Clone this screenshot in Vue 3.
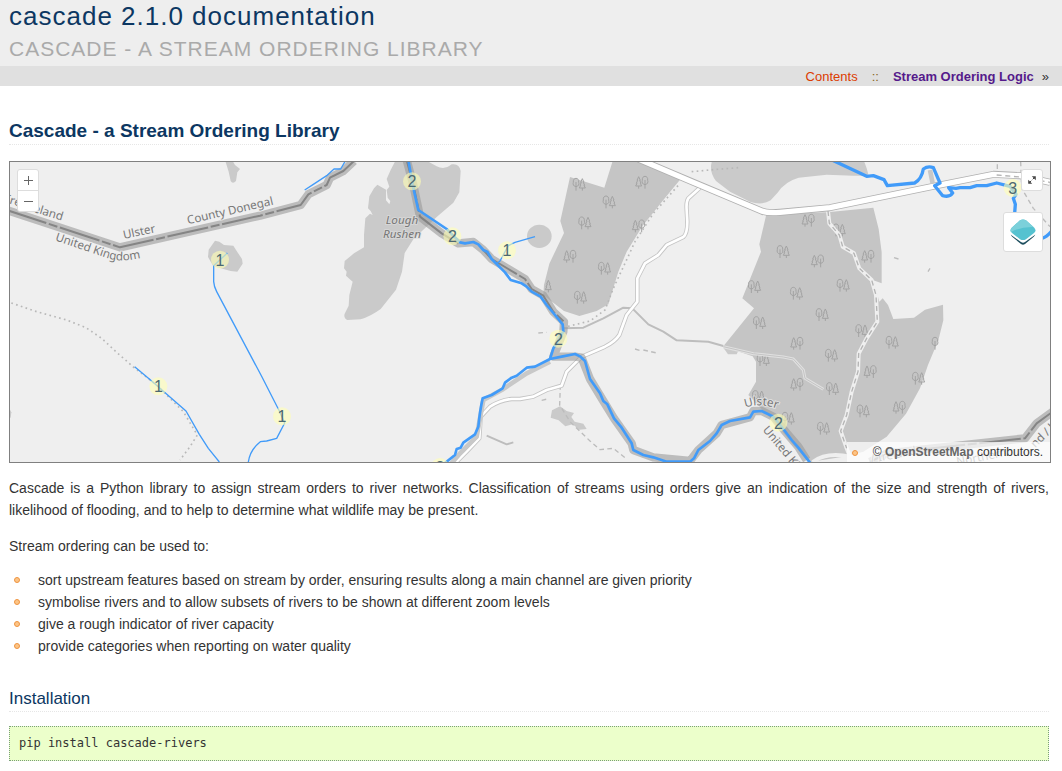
<script setup>
const uses = [
  'sort upstream features based on stream by order, ensuring results along a main channel are given priority',
  'symbolise rivers and to allow subsets of rivers to be shown at different zoom levels',
  'give a rough indicator of river capacity',
  'provide categories when reporting on water quality',
]

// Map units: three per screen pixel.
const broadleafFirst = [
  [1738, 88], [1828, 141], [1755, 204], [1814, 340], [1742, 427], [2350, 290],
  [2264, 395], [2279, 503], [2290, 614], [2276, 725], [2390, 415], [2530, 391],
  [2467, 479], [2586, 527], [2495, 601], [2498, 701], [2677, 562], [2365, 790],
  [2471, 820], [2756, 670], [2590, 768], [2518, 225],
]
const coniferFirst = [
  [1926, 82], [1916, 213], [1710, 304], [2425, 196], [2453, 318], [2604, 304],
  [2391, 565], [2391, 688], [2611, 650], [2698, 757],
]

const orders = [
  [660, 314, 1], [475, 694, 1], [1236, 79, 2], [1357, 244, 2], [1521, 286, 1],
  [846, 784, 1], [1320, 936, 2], [1675, 551, 2], [2335, 803, 2], [3038, 99, 3],
]
</script>

<template>
  <div class="page">
    <header class="header">
      <div class="title">cascade 2.1.0 documentation</div>
      <div class="subtitle">Cascade - a Stream Ordering Library</div>
    </header>
    <nav class="topnav">
      <a class="contents" href="#contents">Contents</a>
      <span class="sep">::</span>
      <a class="next" href="#logic">Stream Ordering Logic</a>
      <span>»</span>
    </nav>

    <main class="content">
      <h1>Cascade - a Stream Ordering Library</h1>

      <div class="map">
        <svg class="canvas" viewBox="30 21 3120 900" preserveAspectRatio="xMidYMid slice" role="img" aria-label="River network map">
          <defs>
            <symbol id="broadleaf" viewBox="0 0 18 38" overflow="visible">
              <path d="M9 38V12M9 26C1 25 -1 18 1 13C0 5 4 1 9 1C14 1 18 5 17 13C19 18 17 25 9 26" />
            </symbol>
            <symbol id="conifer" viewBox="0 0 18 38" overflow="visible">
              <path d="M9 38V30M9 2L4 13H6L2 22H4L0 30H18L14 22H16L12 13H14Z" />
            </symbol>
            <path id="uk-west" d="M164 256L318 308Q362 326 440 304" />
            <path id="ulster-east" d="M2236 758Q2280 741 2340 764" />
          </defs>

          <g class="water">
            <path d="M676 18L686 50L692 78Q698 88 708 78L712 52L720 42L705 30L698 18Z" />
            <path d="M645 257L658 260L672 270L700 272L710 288L726 312L728 326L712 350L692 348L640 334L624 306L626 284Z" />
            <path d="M1186 18L1172 45L1160 72L1168 95L1160 105L1163 128L1171 138L1168 148L1158 136L1158 104L1132 89L1122 100L1108 124L1104 160L1112 168L1118 180L1110 176L1096 190L1092 240L1092 277L1062 295L1034 318L1032 340L1040 350L1038 362L1058 380L1048 420L1046 452L1034 476Q1030 490 1042 495L1082 493Q1112 484 1142 462L1188 404L1206 350L1214 294L1240 253L1310 186L1360 143L1378 112L1382 48Q1378 24 1355 28Q1334 46 1310 34L1285 20Z" />
            <ellipse cx="1618" cy="244" rx="37" ry="35" />
            <path d="M2136 18Q2126 50 2148 78L2190 110L2250 140Q2285 152 2312 136L2334 112Q2354 80 2396 68L2480 59L2560 62L2606 62L2600 40L2592 18Z" />
            <path d="M30 764L34 772L32 788H30Z" />
            <path d="M1656 766L1680 754L1700 768L1722 774L1714 786L1724 800L1750 806L1760 822L1738 824L1718 808L1696 814L1676 796L1652 788Z" />
            <path d="M2170 578L2216 585L2210 598L2184 598Z" />
          </g>

          <g class="forest">
            <path d="M1838 18H1945L2040 74L1990 135L1928 212L1880 290L1855 350L1825 448L1790 468L1738 483L1692 468L1630 420L1632 390L1648 326L1692 234L1681 198L1710 66L1813 98Z" />
            <path d="M2299 178L2482 172L2620 158L2636 222L2645 292V385L2620 376L2638 440L2648 430L2664 450L2680 492L2742 488L2775 464L2829 449L2830 496L2815 556L2784 630L2760 700L2718 776L2660 845L2590 890L2530 905L2428 921L2380 870L2340 820L2300 778L2245 720L2268 680L2268 620L2258 604L2170 574L2262 460L2227 430L2283 290L2278 268Z" />
          </g>

          <g class="trees">
            <template v-for="[x, y] in broadleafFirst" :key="`b${x}-${y}`">
              <use href="#broadleaf" :x="x - 19" :y="y - 19" width="18" height="38" />
              <use href="#conifer" :x="x" :y="y - 19" width="18" height="38" />
            </template>
            <template v-for="[x, y] in coniferFirst" :key="`c${x}-${y}`">
              <use href="#conifer" :x="x - 19" :y="y - 19" width="18" height="38" />
              <use href="#broadleaf" :x="x" :y="y - 19" width="18" height="38" />
            </template>
            <use href="#conifer" x="1636" y="374" width="18" height="38" />
            <use href="#broadleaf" x="2796" y="546" width="18" height="38" />
          </g>

          <g class="tracks">
            <path class="lane" d="M1690 520L1750 518L1810 490L1870 458L1897 460L1945 508L1990 530L2030 556L2125 560L2170 573" />
            <path class="lane" d="M1460 842L1520 868L1540 862" />
            <path class="lane-light" d="M2170 575L2260 596L2350 606L2380 612L2410 645L2415 670L2470 703" />
            <path class="lane-light-in" d="M2170 575L2260 596L2350 606L2380 612L2410 645L2415 670L2470 703" />
            <path class="dots" d="M34 444L110 470L200 495L258 518L305 550L350 592L400 636L470 690L550 770L592 840L570 875L540 915" />
            <path class="dots" d="M2034 92L1960 175L1905 260L1868 340L1840 400L1815 465L1770 498L1700 515" />
            <path class="dots" d="M2075 50L2140 44L2215 38" />
            <path class="dashes" d="M1681 690L1679 750L1710 800L1770 858L1800 884L1840 880L1880 912" />
            <path class="dashes" d="M1905 582L1925 588M1930 585L1975 595M1615 534L1640 532M1625 736L1642 732M2682 308L2702 314M2784 350L2790 340" />
            <path class="dashes" d="M2992 28V58M3062 20L3065 100L3100 160L3150 215" />
          </g>

          <g class="roads">
            <path class="casing" d="M2100 98L2065 130Q2058 140 2060 165L2062 200Q2062 236 2050 246L2000 270L1975 300L1935 325L1912 370V440L1880 480L1858 540Q1845 560 1815 575L1745 605L1700 650L1685 692L1640 705L1600 725L1560 732L1535 732Q1500 736 1470 755L1442 785L1438 850L1400 890L1365 925" />
            <path class="fill" d="M2100 98L2065 130Q2058 140 2060 165L2062 200Q2062 236 2050 246L2000 270L1975 300L1935 325L1912 370V440L1880 480L1858 540Q1845 560 1815 575L1745 605L1700 650L1685 692L1640 705L1600 725L1560 732L1535 732Q1500 736 1470 755L1442 785L1438 850L1400 890L1365 925" />
            <path class="gravel" d="M2484 168L2488 205L2518 240L2528 275L2562 295L2578 340L2615 375L2628 420L2632 500L2600 550L2576 596L2574 650L2555 710L2540 780L2522 828L2540 880L2550 905Q2480 890 2438 921" />
            <path class="gravel-dash" d="M2484 168L2488 205L2518 240L2528 275L2562 295L2578 340L2615 375L2628 420L2632 500L2600 550L2576 596L2574 650L2555 710L2540 780L2522 828L2540 880" />
            <path class="main-casing" d="M1915 12L2080 82L2285 168Q2300 175 2340 172L2490 158L2810 92L2980 58L3060 62L3150 82" />
            <path class="main-fill" d="M1915 12L2080 82L2285 168Q2300 175 2340 172L2490 158L2810 92L2980 58L3060 62L3150 82" />
            <path class="gravel-dash" d="M2990 60L3060 66L3150 82" />
          </g>

          <g class="boundary">
            <path class="band" d="M20 165L360 277L780 182L902 150L925 118L980 90L990 68L1030 48L1062 18" />
            <path class="line" d="M20 165L360 277L780 182L902 150L925 118L980 90L990 68L1030 48L1062 18" />
            <path class="band" d="M1220 15L1240 90L1260 185L1325 235L1375 265L1420 261L1450 285L1475 312L1525 342L1575 372L1595 402L1630 422L1660 470L1692 500L1690 530L1660 605L1725 605L1745 608L1770 672L1810 738L1842 790L1895 865L1900 885L1960 907L2070 918L2095 885L2150 835L2165 810L2250 787L2260 768L2285 768L2320 785L2352 825L2395 875L2420 915" />
            <path class="line" d="M1220 15L1240 90L1260 185L1325 235L1375 265M1450 285L1475 312L1525 342L1575 372L1595 402L1630 422L1660 470L1692 500" />
            <path class="under-bank" d="M1350 930L1380 895L1430 845L1450 735L1505 705L1580 655L1650 620" />
            <path class="band" d="M2610 921L2660 895L3075 850L3110 805L3165 765" />
            <path class="line" d="M2610 921L2660 895L3075 850L3110 805L3165 765" />
            <path class="under-bank" d="M2790 45L2798 85" />
          </g>

          <g class="labels">
            <text x="0" y="0" transform="translate(16 142) rotate(17)">Ire</text>
            <text x="0" y="0" transform="translate(98 170) rotate(17)">eland</text>
            <text x="0" y="0" transform="translate(372 252) rotate(-12)">Ulster</text>
            <text x="0" y="0" transform="translate(564 208) rotate(-13)">County Donegal</text>
            <text><textPath href="#uk-west">United Kingdom</textPath></text>
            <text class="lake" x="1206" y="208">Lough</text>
            <text class="lake" x="1206" y="250">Rushen</text>
            <text><textPath href="#ulster-east">Ulster</textPath></text>
            <text x="0" y="0" transform="translate(2287 825) rotate(50)">United Kingdom</text>
            <text x="0" y="0" transform="translate(2614 924) rotate(-11)">/ Ireland</text>
            <text x="0" y="0" transform="translate(2872 932) rotate(-11)">Northern</text>
            <text x="0" y="0" transform="translate(3106 880) rotate(-45)">nd / J</text>
          </g>

          <g class="streams">
            <path d="M682 294L641 332V380Q642 395 650 410L786 666L838 768L854 804L830 850L800 858L781 860Q750 885 745 921" />
            <path d="M404 635L455 678L558 768L598 838L625 880L658 921" />
            <path d="M914 105L940 88L980 62L1002 42L1022 42L1036 18" />
            <path d="M1605 245L1545 262L1525 272L1500 318L1488 328" />
          </g>
          <g class="rivers">
            <path d="M1225 15L1238 90L1255 165L1340 222L1380 262L1395 265L1420 261L1435 268L1450 285L1462 290L1475 312L1515 352L1532 375L1565 385L1580 395L1595 410L1622 425L1640 450L1665 480L1688 508L1690 530L1660 580L1650 612" />
            <path d="M1320 936L1365 900L1370 882L1382 878L1390 863L1425 838L1435 815Q1440 765 1448 730L1475 720L1508 700L1515 683L1535 668L1550 662L1580 638L1605 635L1650 612L1685 605L1725 597L1740 604L1755 618L1770 672L1800 715L1810 738L1822 748L1842 790L1865 818L1895 865L1900 885L1930 900L1960 907L2000 920H2070L2082 910L2095 885L2130 858L2150 835L2165 810L2190 798L2250 787L2260 770L2285 768L2320 785L2350 822L2375 855L2395 878L2430 923" />
            <path class="order3" d="M2496 15L2600 64L2620 62L2652 74L2662 92L2744 84Q2765 72 2770 42Q2784 32 2800 38L2820 84L2804 92L2828 122Q2850 128 2858 114L2846 98L2868 100L2880 98L2910 98L2930 92L2960 92L2990 84L3030 94L3048 118L3040 130L3046 148L3042 200M3124 250Q3138 248 3155 228" />
          </g>

          <g class="orders">
            <template v-for="[x, y, n] in orders" :key="`${x}-${y}`">
              <circle :cx="x" :cy="y" r="27" />
              <text :x="x" :y="y + 18">{{ n }}</text>
            </template>
          </g>
        </svg>

        <div class="zoom">
          <button type="button" aria-label="Zoom in">
            <svg viewBox="0 0 11 11"><path d="M5.5 1V10M1 5.5H10" /></svg>
          </button>
          <button type="button" aria-label="Zoom out">
            <svg viewBox="0 0 11 11"><path d="M1 5.5H10" /></svg>
          </button>
        </div>

        <div class="tools">
          <button class="full" type="button" aria-label="Toggle full-screen">
            <svg viewBox="0 0 10 10">
              <path class="shaft" d="M2 8L4.300 5.700M5.700 4.300L8 2" />
              <path d="M4.800 1.200H8.800V5.200ZM1.200 4.800V8.800H5.200Z" />
            </svg>
          </button>
          <button class="layers" type="button" aria-label="Layers">
            <svg viewBox="0 0 28 28">
              <path fill="#1d4e5e" d="M2 15.500L14 22L26 15.500Q26.500 17.500 24.800 18.800L16 26Q14 27.500 12 26L3.200 18.800Q1.500 17.500 2 15.500Z" />
              <path fill="#fff" d="M1 13L14 20L27 13Q27.500 16 25.500 17.300L16 24Q14 25.400 12 24L2.500 17.300Q.5 16 1 13Z" />
              <path fill="#55c2d0" d="M11 2.300Q14 .5 17 2.300L25 9.500Q28 12.500 25 15L17 21.200Q14 23 11 21.200L3 15Q0 12.500 3 9.500Z" />
              <path fill="#7bd0da" d="M11 2.300Q14 .5 17 2.300L24.500 9Q12 8.500 2 14Q.5 12 3 9.500Z" />
            </svg>
          </button>
        </div>

        <ul class="attribution">
          <li>© <a href="#osm">OpenStreetMap</a> contributors.</li>
        </ul>
      </div>

      <p class="intro">
        Cascade is a Python library to assign stream orders to river networks. Classification of streams using orders
        give an indication of the size and strength of rivers, likelihood of flooding, and to help to determine what
        wildlife may be present.
      </p>
      <p>Stream ordering can be used to:</p>
      <ul class="uses">
        <li v-for="use in uses" :key="use">{{ use }}</li>
      </ul>

      <h2>Installation</h2>
      <pre>pip install cascade-rivers</pre>
    </main>
  </div>
</template>

<style>
body {
  margin: 0;
  background: #fff;
}
</style>

<style scoped>
.page {
  font-family: "Liberation Sans", Arial, sans-serif;
  font-size: 14px;
  line-height: 22px;
  color: #333;
}
.header {
  padding: 0 9px 1px;
  background: #eee;
}
.title {
  font-size: 26px;
  line-height: 33px;
  letter-spacing: 1px;
  color: #0c3762;
}
.subtitle {
  font-size: 21px;
  line-height: 32px;
  letter-spacing: 1px;
  text-transform: uppercase;
  color: #aaa;
}
.topnav {
  display: flex;
  justify-content: flex-end;
  padding: 1px 13px 0;
  font-size: 13px;
  line-height: 19px;
  background: #e0e0e0;
}
.topnav a {
  text-decoration: none;
}
.contents {
  color: #dc3c01;
}
.sep {
  margin: 0 14px;
  color: #886622;
}
.next {
  margin-right: 8px;
  font-weight: bold;
  color: #551a8b;
}
.content {
  padding: 32px 13px 10px 9px;
}
h1,
h2 {
  margin: 0;
  border-bottom: 1px dotted #e6e6e6;
  color: #0c3762;
}
h1 {
  font-size: 19px;
  line-height: 26px;
}
h2 {
  margin-top: 30px;
  font-size: 17px;
  font-weight: normal;
  line-height: 24px;
}
.map {
  position: relative;
  width: 100%;
  height: 300px;
  margin-top: 16px;
  border: 1px solid #808080;
  background: #efefef;
}
.canvas {
  display: block;
  width: 100%;
  height: 100%;
}
.canvas path {
  stroke-linejoin: round;
}
.water {
  fill: #cacaca;
}
.forest {
  fill: #c5c5c5;
}
.trees {
  fill: none;
  stroke: #a3a3a3;
  stroke-width: 3;
}
.tracks,
.roads,
.boundary,
.streams,
.rivers {
  fill: none;
}
.lane {
  stroke: #bdbdbd;
  stroke-width: 6;
}
.lane-light {
  stroke: #e0e0e0;
  stroke-width: 9;
}
.lane-light-in {
  stroke: #c4c4c4;
  stroke-width: 3;
}
.dots {
  stroke: #b8b8b8;
  stroke-width: 5;
  stroke-dasharray: 5 10;
}
.dashes {
  stroke: #bcbcbc;
  stroke-width: 4;
  stroke-dasharray: 14 10;
}
.casing {
  stroke: #c4c4c4;
  stroke-width: 13;
}
.fill {
  stroke: #fff;
  stroke-width: 8;
}
.gravel {
  stroke: #efefef;
  stroke-width: 12;
}
.gravel-dash {
  stroke: #b4b4b4;
  stroke-width: 4;
  stroke-dasharray: 15 11;
}
.main-casing {
  stroke: #b0b0b0;
  stroke-width: 21;
}
.main-fill {
  stroke: #fff;
  stroke-width: 16;
}
.band {
  stroke: #999;
  stroke-opacity: 0.6;
  stroke-width: 25;
}
.line {
  stroke: #777;
  stroke-opacity: 0.8;
  stroke-width: 6;
  stroke-dasharray: 125 8 27 8;
}
.under-bank {
  stroke: #c8c8c8;
  stroke-width: 14;
}
.labels {
  font-family: "Noto Sans", sans-serif;
  font-size: 35px;
  fill: #777;
  stroke: #efefef;
  stroke-opacity: 0.7;
  stroke-width: 6;
  paint-order: stroke;
}
.lake {
  font-style: italic;
  text-anchor: middle;
  stroke: #dcdcdc;
}
.streams {
  stroke: #419bf9;
  stroke-width: 4;
}
.rivers {
  stroke: #419bf9;
  stroke-width: 8;
}
.order3 {
  stroke-width: 10;
}
.orders circle {
  fill: #ffffb4;
  fill-opacity: 0.6;
}
.orders text {
  font-size: 48px;
  text-anchor: middle;
  fill: #4c6872;
}
.map button {
  display: flex;
  align-items: center;
  justify-content: center;
  padding: 0;
  border: 0;
  background: #fff;
}
.zoom {
  position: absolute;
  top: 7px;
  left: 7px;
  display: grid;
  gap: 1px;
  border: 1px solid #ddd;
  border-radius: 3px;
  background: #ddd;
  overflow: hidden;
}
.zoom button {
  width: 20px;
  height: 20px;
}
.zoom svg {
  width: 11px;
  height: 11px;
  stroke: #666;
  stroke-width: 1;
}
.tools {
  position: absolute;
  top: 7px;
  right: 7px;
  display: grid;
  justify-items: end;
  gap: 21px;
}
.map .tools button {
  border: 1px solid #ddd;
  border-radius: 3px;
}
.tools .full {
  width: 22px;
  height: 22px;
}
.full svg {
  width: 10px;
  height: 10px;
  fill: #444;
}
.shaft {
  stroke: #444;
  stroke-width: 1;
}
.tools .layers {
  width: 40px;
  height: 40px;
}
.layers svg {
  width: 28px;
  height: 28px;
}
ul {
  margin: 0;
  padding: 0;
  list-style: none;
}
li {
  position: relative;
}
li::before {
  content: "";
  position: absolute;
  top: 8px;
  left: 5px;
  box-sizing: border-box;
  width: 6px;
  height: 6px;
  border: 1px solid #ef9440;
  border-radius: 50%;
  background: #fcc587;
}
.attribution {
  position: absolute;
  right: 0;
  bottom: 0;
  padding: 0 7px 0 0;
  font-size: 12px;
  line-height: 20px;
  background: rgba(255, 255, 255, 0.7);
}
.attribution li {
  padding-left: 26px;
}
.attribution a {
  font-weight: bold;
  text-decoration: none;
  color: #666;
}
p {
  margin: 0 0 14px;
}
.intro {
  margin-top: 14px;
  text-align: justify;
}
.uses {
  margin-top: -2px;
}
.uses li {
  padding-left: 29px;
}
pre {
  margin: 14px 0 0;
  padding: 8px 9px;
  border: 1px dotted #7a9f7a;
  font-family: "DejaVu Sans Mono", monospace;
  font-size: 12px;
  line-height: 17px;
  background: #ecffcb;
}
</style>
